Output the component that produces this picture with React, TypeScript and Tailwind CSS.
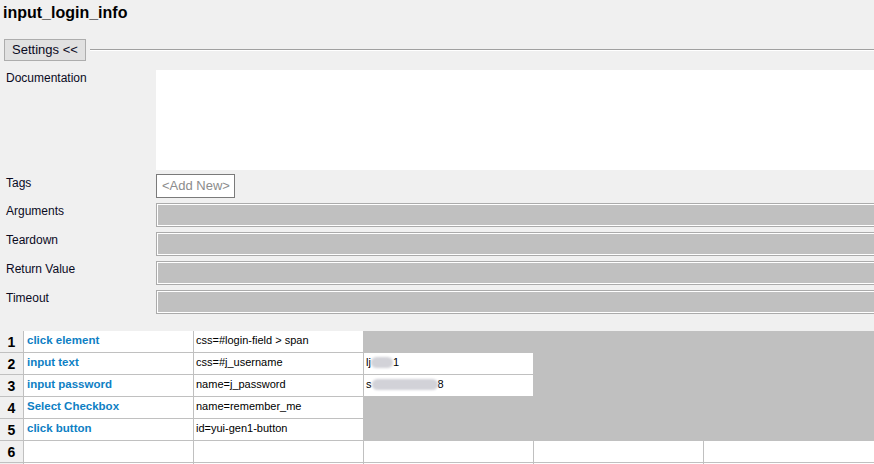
const steps = [
  {kw: "click element", arg: "css=#login-field > span", val: null},
  {kw: "input text", arg: "css=#j_username", val: {pre: "lj", blob: 22, post: "1"}},
  {kw: "input password", arg: "name=j_password", val: {pre: "s", blob: 66, post: "8"}},
  {kw: "Select Checkbox", arg: "name=remember_me", val: null},
  {kw: "click button", arg: "id=yui-gen1-button", val: null},
];

const GrayField = () => (
  <div className="mr-[-8px] h-[24px] flex-1 border border-[#ababab] bg-white p-px">
    <div className="h-full w-full bg-[#c0c0c0]" />
  </div>
);

const SettingRow = ({label, children, top}: {label: string; children: React.ReactNode; top: string}) => (
  <div className={`flex ${top}`}>
    <div className="w-[156px] shrink-0 pl-[6px] pt-[1px] text-[12px] leading-[14px] text-[#0a0a1e]">{label}</div>
    {children}
  </div>
);

const App = () => {
  return (
    <div className="h-[464px] w-[874px] overflow-hidden bg-[#f0f0f0] font-['Liberation_Sans',Arial,sans-serif] text-black">
      <div className="h-[39px] pl-[3px] pt-[3px] text-[16px] font-bold leading-[20px]">input_login_info</div>

      <div className="flex h-[22px] items-center">
        <button className="ml-[4px] h-[22px] w-[82px] border border-[#adadad] bg-[#e1e1e1] text-[13px] leading-[20px] text-[#0a0a1e]">
          Settings &lt;&lt;
        </button>
        <div className="ml-[4px] flex-1 border-t border-b border-t-[#a0a0a0] border-b-white" />
      </div>

      <div className="mt-[9px] flex flex-col overflow-hidden">
        <div className="flex h-[100px]">
          <div className="w-[156px] shrink-0 pl-[6px] pt-[1px] text-[12px] leading-[14px] text-[#0a0a1e]">Documentation</div>
          <div className="flex-1 bg-white" />
        </div>

        <div className="mt-[4px] flex h-[24px]">
          <div className="w-[156px] shrink-0 pl-[6px] pt-[2px] text-[12px] leading-[14px] text-[#0a0a1e]">Tags</div>
          <div className="h-[24px] w-[79px] border border-[#7a7a7a] bg-white pl-[5px] text-[13px] leading-[22px] text-[#8c8c8c]">
            &lt;Add New&gt;
          </div>
        </div>

        <SettingRow label="Arguments" top="mt-[5px]">
          <GrayField />
        </SettingRow>
        <SettingRow label="Teardown" top="mt-[5px]">
          <GrayField />
        </SettingRow>
        <SettingRow label="Return Value" top="mt-[5px]">
          <GrayField />
        </SettingRow>
        <SettingRow label="Timeout" top="mt-[5px]">
          <GrayField />
        </SettingRow>
      </div>

      <div className="mt-[17px] grid grid-cols-[23px_169px_169px_169px_169px_1fr] auto-rows-[21px] gap-px bg-[#c0c0c0]">
        {steps.map((s, i) => (
          <div key={s.kw} className="contents">
            <div className="bg-[#f0f0f0] text-center text-[14px] font-bold leading-[22px]">{i + 1}</div>
            <div className="bg-white pl-[3px] text-[11.5px] font-bold leading-[18px] text-[#0e80c4]">{s.kw}</div>
            <div className="bg-white pl-[2px] text-[11px] leading-[18px]">{s.arg}</div>
            {s.val ? (
              <div className="flex items-start bg-white pl-[2px] text-[11px] leading-[18px]">
                <span>{s.val.pre}</span>
                <span
                  className="mt-[4px] inline-block h-[11px] rounded-full bg-[#d2d2d8] blur-[1px]"
                  style={{width: s.val.blob}}
                />
                <span>{s.val.post}</span>
              </div>
            ) : (
              <div />
            )}
            <div />
            <div />
          </div>
        ))}
        <div className="contents">
          <div className="bg-[#f0f0f0] text-center text-[14px] font-bold leading-[22px]">6</div>
          <div className="bg-white" />
          <div className="bg-white" />
          <div className="bg-white" />
          <div className="bg-white" />
          <div className="bg-white" />
        </div>
        <div className="contents">
          <div className="bg-[#f0f0f0]" />
          <div className="bg-white" />
          <div className="bg-white" />
          <div className="bg-white" />
          <div className="bg-white" />
          <div className="bg-white" />
        </div>
      </div>
    </div>
  );
};

export default App;
